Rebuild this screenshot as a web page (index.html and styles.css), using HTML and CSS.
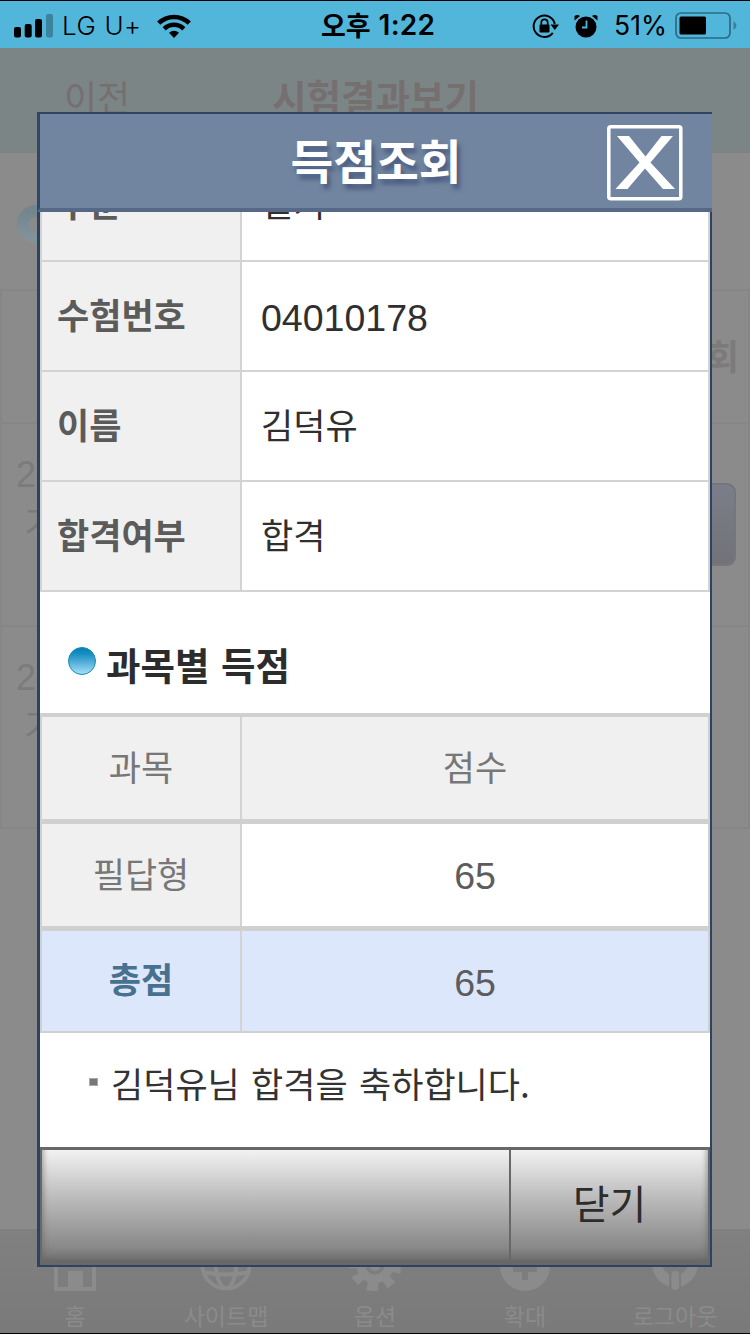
FILE: index.html
```html
<!DOCTYPE html>
<html lang="ko">
<head>
<meta charset="utf-8">
<title>득점조회</title>
<link rel="stylesheet" href="styles.css">
</head>
<body>
<div class="screen">
  <div class="status">
    <div class="status-left">
      <svg width="40" height="26" viewBox="0 0 40 26"><rect x="0" y="14" width="7" height="10.500" rx="2"/><rect x="10.700" y="11" width="7" height="13.500" rx="2"/><rect x="21" y="6" width="7" height="18.500" rx="2"/><rect x="32" y="1" width="7" height="23.500" rx="2" opacity=".27"/></svg>
      <span class="carrier">LG U+</span>
      <svg class="wifi" width="34" height="24" viewBox="0 0 34 24"><g fill="none" stroke="#000" stroke-width="4.500"><path d="M1.700 9.200a22 22 0 0 1 30.600 0"/><path d="M7.200 14.800a14 14 0 0 1 19.600 0"/></g><path d="M17 24l-5-5.200q5-4 10 0z"/></svg>
    </div>
    <div class="clock"><span class="ampm">오후</span><span class="time">1:22</span></div>
    <div class="status-right">
      <svg width="28" height="26" viewBox="0 0 28 26"><path d="M20.800 19.800A10.700 10.700 0 1 1 22.800 11" fill="none" stroke="#000" stroke-width="2"/><path d="M18.500 11.500h8.500l-4.200 5.500z"/><rect x="7.500" y="11.500" width="10" height="8" rx="1"/><path d="M9.300 12v-2.500a3.200 3.200 0 0 1 6.400 0V12" fill="none" stroke="#000" stroke-width="1.700"/></svg>
      <svg class="alarm" width="24" height="24" viewBox="0 0 24 24"><circle cx="12" cy="13" r="10.500"/><path d="M.500 6.500V2q3-2 5.500 0zM23.500 6.500V2q-3-2-5.500 0z"/><path d="M12.500 6.500v7H8" fill="none" stroke="#52b6db" stroke-width="1.800"/></svg>
      <span class="percent">51%</span>
      <svg class="battery" width="63" height="27" viewBox="0 0 63 27"><rect x="1" y="1" width="54" height="25" rx="5" fill="none" stroke="#286b84" stroke-width="1.700"/><rect x="4.500" y="4.500" width="26.500" height="18" rx="1.500"/><path d="M58.500 9v9q6-4.500 0-9z" fill="#3a7f97"/></svg>
    </div>
  </div>

  <div class="page-head"><span class="back">이전</span><span class="page-title">시험결과보기</span></div>
  <div class="page-section">
    <svg width="38" height="38" viewBox="0 0 38 38"><defs><linearGradient id="ring" x2="0" y2="1"><stop offset="0" stop-color="#71868e"/><stop offset="1" stop-color="#829299"/></linearGradient></defs><circle cx="19" cy="19" r="13" fill="none" stroke="url(#ring)" stroke-width="12"/></svg>
  </div>
  <div class="page-list">
    <div class="list-row list-head"><span>회</span></div>
    <div class="list-row"><p class="exam">2<br><span>기</span></p><i class="view-btn"></i></div>
    <div class="list-row"><p class="exam">2<br><span>기</span></p></div>
  </div>
  <div class="tabs">
    <div class="tab"><svg viewBox="0 0 52 52"><path d="M5 18h4v30h34V18h4v34H5z"/><rect x="19" y="32" width="15" height="20"/></svg><span>홈</span></div>
    <div class="tab tab-site"><svg viewBox="0 0 52 52"><g fill="none" stroke="#8b8b8b" stroke-width="4"><circle cx="26" cy="26" r="23.500"/><ellipse cx="26" cy="26" rx="10" ry="23"/><path d="M2 33q24 5 48 0"/></g></svg><span>사이트맵</span></div>
    <div class="tab"><svg viewBox="0 0 52 52"><circle cx="26" cy="26" r="14" fill="none" stroke="#8b8b8b" stroke-width="9"/><circle cx="26" cy="26" r="6"/><path d="M21 42h10l1 10H20zM21 10h10l1-10H20zM10 21v10L0 32V20zM42 21v10l10 1V20zM34 40l6-6 8 7-7 7zM18 40l-6-6-8 7 7 7z" transform="rotate(6 26 26)"/></svg><span>옵션</span></div>
    <div class="tab"><svg viewBox="0 0 52 52"><path fill-rule="evenodd" d="M26 2a25 25 0 1 0 0 50a25 25 0 1 0 0-50M23 14h6v12h9v7h-9v8h-6v-8h-9v-7h9z"/></svg><span>확대</span></div>
    <div class="tab"><svg viewBox="0 0 52 52"><path d="M20 47.500A24 24 0 0 1 3 24h10a13 13 0 0 0 7 11zM32 47.500A24 24 0 0 0 49 24H39a13 13 0 0 1-7 11z"/><rect x="22.500" y="32" width="7.500" height="19" rx="3.700"/></svg><span>로그아웃</span></div>
  </div>

  <div class="modal">
    <div class="modal-head">
      <h1>득점조회</h1>
      <svg class="close" width="76" height="76" viewBox="0 0 76 76"><rect x="1.800" y="1.800" width="72" height="72" rx="2" fill="none" stroke="#fff" stroke-width="3.500"/><path fill="#fff" d="M10 11h12l16.500 20.500L54.500 11H66L43.500 37.500 68 64H56L38 43.500 20.500 64H8.500L32.500 37.500z"/></svg>
    </div>
    <div class="modal-body">
      <div class="info">
        <div class="row clipped"><b>구분</b><span>필기</span></div>
        <div class="row"><b>수험번호</b><span class="num">04010178</span></div>
        <div class="row"><b>이름</b><span>김덕유</span></div>
        <div class="row"><b>합격여부</b><span>합격</span></div>
      </div>
      <div class="subject">
        <svg width="29" height="29" viewBox="0 0 29 29"><defs><linearGradient id="dot" x2="0" y2="1"><stop offset="0" stop-color="#0080b8"/><stop offset=".25" stop-color="#1b8fc3"/><stop offset="1" stop-color="#a9e0fb"/></linearGradient></defs><circle cx="14" cy="14" r="13.500" fill="url(#dot)" stroke="#138fae" stroke-width="1"/></svg>
        <h2>과목별 득점</h2>
      </div>
      <div class="scores">
        <div class="score head"><span>과목</span><span>점수</span></div>
        <div class="score"><span>필답형</span><span class="num">65</span></div>
        <div class="score total"><b>총점</b><span class="num">65</span></div>
      </div>
      <p class="message"><i></i>김덕유님 합격을 축하합니다.</p>
    </div>
    <div class="modal-foot"><div class="blank"></div><button>닫기</button></div>
  </div>
</div>
</body>
</html>
```

FILE: styles.css
```css
* { box-sizing: border-box; }
body { margin: 0; font-family: "Noto Sans CJK KR", sans-serif; }
h1, h2, p { margin: 0; }
svg { display: block; flex: none; }

.screen {
  position: relative;
  width: 750px;
  height: 1334px;
  overflow: hidden;
  display: flex;
  flex-direction: column;
  background: #8b8b8b;
  border-bottom: 1px solid #000;
}

.status {
  height: 48px;
  flex: none;
  display: grid;
  grid-template-columns: 300px 156px 294px;
  background: #52b6db;
  border-top: 1px solid #000;
  font-family: Inter, "Noto Sans CJK KR", sans-serif;
  font-size: 26px;
  line-height: 47px;
}
.status-left { display: flex; align-items: center; padding: 1px 0 0 14px; }
.carrier { margin-left: 8px; letter-spacing: .6px; font-weight: 300; }
.wifi { margin-left: 15px; }
.clock { display: flex; justify-content: center; gap: 8px; font-weight: 600; padding-top: 1px; }
.ampm { font-family: "Noto Sans CJK KR", sans-serif; font-size: 27px; font-weight: 700; margin-top: -1px; }
.time { font-size: 28px; letter-spacing: .2px; }
.status-right { display: flex; align-items: center; justify-content: flex-end; padding: 1px 12px 0 0; }
.alarm { margin-left: 14px; }
.percent { margin-left: 16px; font-size: 26.500px; }
.battery { margin-left: 8px; }

.page-head {
  height: 105px;
  flex: none;
  display: flex;
  padding: 22px 0 0 64px;
  background: #7c8586;
  border-bottom: 1px solid #857f80;
  color: #766f70;
  line-height: 52px;
}
.back { width: 208px; font-size: 36px; }
.page-title { font-size: 37.500px; font-weight: 700; }
.page-section { height: 136px; flex: none; padding: 52px 0 0 17px; }
.page-list { flex: none; border: 2px solid #868686; color: #7b7b7b; }
.list-row { height: 203px; display: flex; justify-content: space-between; border-top: 2px solid #868686; }
.list-row:last-child { height: 202px; }
.list-head { height: 131px; border-top: 0; justify-content: flex-end; padding: 38px 9px 0 0; font-size: 35px; line-height: 52px; font-weight: 700; }
.exam { padding: 26px 0 0 14px; font: 36px/50px "Liberation Sans", "Noto Sans CJK KR", sans-serif; }
.exam span { padding-left: 8px; }
.view-btn { width: 90px; height: 83px; margin: 59px 12px 0 0; border: 2px solid #74757d; border-radius: 9px; background: linear-gradient(#7a7e89, #727379); }

.tabs {
  height: 104px;
  margin-top: auto;
  flex: none;
  display: grid;
  grid-template-columns: repeat(5, 150px);
  background: linear-gradient(#808080, #7a7a7a);
  color: #8b8b8b;
}
.tab { display: flex; flex-direction: column; align-items: center; padding-top: 10px; font-size: 23px; line-height: 34px; }
.tab svg { width: 52px; height: 52px; fill: currentColor; }
.tab span { margin-top: 7px; }
.tab-site { padding-left: 2px; }

.modal {
  position: absolute;
  left: 37px;
  top: 112px;
  width: 675px;
  height: 1155px;
  display: flex;
  flex-direction: column;
  background: #fff;
}
.modal-head {
  height: 100px;
  flex: none;
  display: grid;
  grid-template-columns: 1fr 105px;
  background: #7285a0;
  border-top: 2px solid #2f4363;
  border-left: 3px solid #30476a;
  border-bottom: 4px solid #566886;
}
.modal-head h1 {
  height: 90px;
  padding-left: 105px;
  text-align: center;
  color: #fff;
  font-size: 46.500px;
  line-height: 90px;
  text-shadow: 3px 5px 5px #46587f;
}
.close { margin-top: 11px; }
.modal-body {
  flex: 1;
  min-height: 0;
  display: flex;
  flex-direction: column;
  border-left: 3px solid #2c4363;
  border-right: 2px solid #2c4363;
}

.info { border: solid #d3d3d3; border-width: 0 2px; color: #2f2f2f; font-size: 35px; }
.row { height: 110px; display: grid; grid-template: 100% / 200px 1fr; border-bottom: 2px solid #d3d3d3; line-height: 104px; }
.row b { background: #f0f0f0; color: #5b5b5b; padding-left: 15px; border-right: 2px solid #d3d3d3; }
.row span { padding-left: 19px; }
.row .num { line-height: 113px; }
.row.clipped { height: 50px; overflow: hidden; grid-template-rows: 110px; align-content: end; }
.num { font-family: "Liberation Sans", sans-serif; font-size: 37.500px; }

.subject { height: 121px; display: flex; padding: 55px 0 0 28px; gap: 9px; color: #2c2c2c; }
.subject h2 { margin-top: -10px; font-size: 37.500px; line-height: 54px; word-spacing: 1px; }

.scores { border: solid #d0d0d0; border-width: 4px 2px 2px; color: #777; font-size: 35px; }
.score { height: 107px; display: grid; grid-template: 100% / 200px 1fr; text-align: center; line-height: 98px; border-bottom: 5px solid #d0d0d0; }
.score > :first-child { background: #f0f0f0; border-right: 2px solid #d3d3d3; }
.score.head { background: #f0f0f0; }
.score .num { color: #5c5c5c; line-height: 104px; }
.score.total { height: 100px; background: #dce7fc; border-bottom: 0; }
.score.total > b { background: #dce7fc; color: #48718f; line-height: 94px; }

.message { display: flex; padding: 23px 0 0 49px; color: #333; font-size: 35px; line-height: 54px; word-spacing: 1.500px; }
.message i { width: 9px; height: 8px; margin: 22px 13px 0 0; background: #777; border: 1px solid #aaa; }

.modal-foot {
  height: 120px;
  flex: none;
  display: grid;
  grid-template-columns: 469px 1fr;
  border: solid #2c4363;
  border-width: 0 2px 2px 3px;
  background: #686868;
}
.blank, button {
  margin: 0;
  border: solid #686868;
  border-width: 3px 0 5px 2px;
  border-radius: 0;
  background: linear-gradient(#f2f2f2, #bdbdbd 42%, #898989 88%, #727272);
  box-shadow: inset 4px -4px 5px -2px #66666680;
}
button {
  padding: 0 0 6px;
  border-right-width: 2px;
  color: #2c2c2c;
  font: 40px/58px "Noto Sans CJK KR", sans-serif;
  box-shadow: inset -4px -4px 5px -2px #66666680;
}
```
